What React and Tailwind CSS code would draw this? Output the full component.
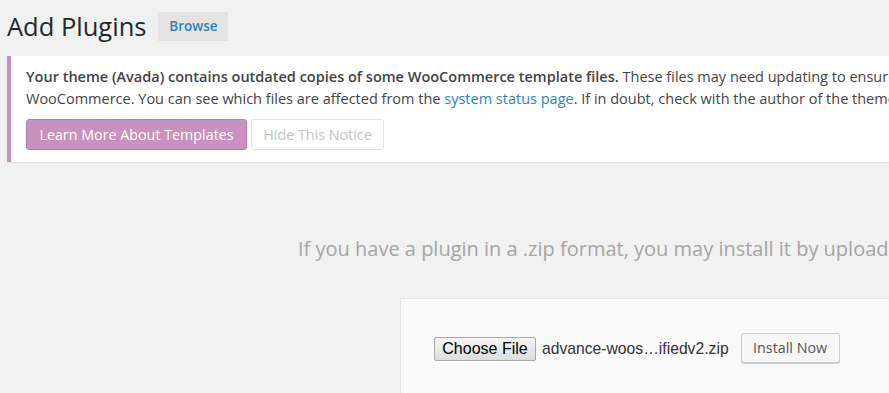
export default function App() {
    return (
        <div className="w-[889px] h-[393px] overflow-hidden bg-[#f1f1f1] text-[#444] font-['Open_Sans',sans-serif]">
            {/* Heading */}
            <div className="flex items-center gap-[12px] pl-[7px] pt-[12px] h-[41px]">
                <h1 className="text-[25.5px] leading-[29px] text-[#23282d] font-normal whitespace-nowrap">Add Plugins</h1>
                <button className="h-[29px] w-[70px] bg-[#e4e4e4] text-[#2e84b5] text-[13.5px] font-semibold leading-[29px]">
                    Browse
                </button>
            </div>

            {/* Woo notice */}
            <div className="mt-[15px] ml-[7px] w-[1100px] bg-white border-l-4 border-[#c790bd] shadow-[0_1px_1px_rgba(0,0,0,0.06)] pl-[15px] pt-[10px] pb-[12px]">
                <p className="text-[14.5px] leading-[22px] whitespace-nowrap">
                    <strong className="font-semibold">Your theme (Avada) contains outdated copies of some WooCommerce template files.</strong>{" "}
                    These files may need updating to ensure they are compatible with the current version of
                </p>
                <p className="text-[14.5px] leading-[22px] whitespace-nowrap">
                    WooCommerce. You can see which files are affected from the{" "}
                    <a className="text-[#2e84b5]">system status page</a>. If in doubt, check with the author of the theme.
                </p>
                <div className="flex gap-[4px] mt-[9px]">
                    <button className="h-[31px] w-[221px] rounded-[3px] bg-[#c991c0] border border-[#b87cae] text-white text-[14.3px] whitespace-nowrap">
                        Learn More About Templates
                    </button>
                    <button className="h-[31px] w-[133px] rounded-[3px] bg-white border border-[#e2e2e2] text-[#c4c4c4] text-[14.3px] whitespace-nowrap">
                        Hide This Notice
                    </button>
                </div>
            </div>

            {/* Upload */}
            <p className="mt-[75px] pl-[298px] text-[20px] leading-[24px] text-[#a5a5a5] whitespace-nowrap">
                If you have a plugin in a .zip format, you may install it by uploading it here.
            </p>
            <div className="mt-[37px] ml-[400px] w-[600px] h-[120px] bg-[#fafafa] border border-[#e5e5e5] flex items-start pt-[38px] pl-[33px]">
                <button className="h-[24px] w-[102px] border border-[#a9a9a9] rounded-[2px] bg-gradient-to-b from-[#f4f4f4] to-[#dedede] text-[16px] text-black font-['Liberation_Sans',sans-serif] leading-[20px]">
                    Choose File
                </button>
                <span className="ml-[6px] text-[15.7px] text-[#333] font-['Liberation_Sans',sans-serif] leading-[23px] whitespace-nowrap">
                    advance-woos…ifiedv2.zip
                </span>
                <button className="ml-[12px] -mt-[4px] h-[30px] w-[99px] rounded-[3px] bg-[#f7f7f7] border border-[#ccc] shadow-[0_1px_0_#ccc] text-[14.3px] text-[#555] whitespace-nowrap">
                    Install Now
                </button>
            </div>
        </div>
    );
}
